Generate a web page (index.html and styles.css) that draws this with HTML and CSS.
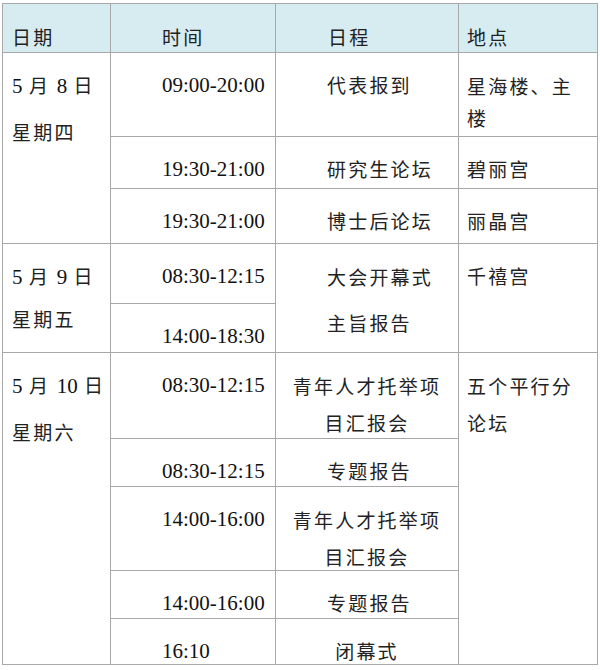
FILE: index.html
```html
<!DOCTYPE html>
<html lang="zh-CN">
<head>
<meta charset="utf-8">
<title>日程</title>
<link rel="stylesheet" href="styles.css">
</head>
<body>
<div class="sched">
  <div class="cell head c1">日期</div>
  <div class="cell head c2">时间</div>
  <div class="cell head c3">日程</div>
  <div class="cell head c4">地点</div>

  <div class="cell date d8"><div><span class="num">5</span> 月 <span class="num">8</span> 日</div><div>星期四</div></div>
  <div class="cell time r2">09:00-20:00</div>
  <div class="cell prog r2">代表报到</div>
  <div class="cell loc loc-a r2"><div>星海楼、主</div><div>楼</div></div>

  <div class="cell time r3">19:30-21:00</div>
  <div class="cell prog r3">研究生论坛</div>
  <div class="cell loc r3">碧丽宫</div>

  <div class="cell time r4">19:30-21:00</div>
  <div class="cell prog r4">博士后论坛</div>
  <div class="cell loc r4">丽晶宫</div>

  <div class="cell date d9"><div><span class="num">5</span> 月 <span class="num">9</span> 日</div><div>星期五</div></div>
  <div class="cell time r5">08:30-12:15</div>
  <div class="cell prog prog-d"><div>大会开幕式</div><div>主旨报告</div></div>
  <div class="cell loc loc-d">千禧宫</div>

  <div class="cell time r6">14:00-18:30</div>

  <div class="cell date d10"><div><span class="num">5</span> 月 <span class="num">10</span> 日</div><div>星期六</div></div>
  <div class="cell time r7">08:30-12:15</div>
  <div class="cell prog two center r7"><div>青年人才托举项</div><div>目汇报会</div></div>
  <div class="cell loc loc-e"><div>五个平行分</div><div>论坛</div></div>

  <div class="cell time r8">08:30-12:15</div>
  <div class="cell prog r8">专题报告</div>

  <div class="cell time r9">14:00-16:00</div>
  <div class="cell prog two center r9"><div>青年人才托举项</div><div>目汇报会</div></div>

  <div class="cell time r10">14:00-16:00</div>
  <div class="cell prog r10">专题报告</div>

  <div class="cell time r11">16:10</div>
  <div class="cell prog center r11">闭幕式</div>
</div>
</body>
</html>
```

FILE: styles.css
```css
html, body {
  margin: 0;
  padding: 0;
  background: #ffffff;
}

body {
  font-family: "Liberation Serif", "Noto Sans CJK SC", serif;
  color: #1a1a1a;
}

.sched {
  margin: 3px 0 0 2px;
  width: 596px;
  display: grid;
  grid-template-columns: 108px 165px 183px 139px;
  grid-template-rows: 49px 84px 52px 55px 60px 49px 86px 48px 84px 48px 46px;
  border-top: 1px solid #a8a8a8;
  border-left: 1px solid #a8a8a8;
  box-sizing: border-box;
}

.cell {
  box-sizing: border-box;
  border-right: 1px solid #a8a8a8;
  border-bottom: 1px solid #a8a8a8;
  font-family: "Noto Sans CJK SC", sans-serif;
  font-size: 19px;
  letter-spacing: 2.2px;
  line-height: 30px;
  padding-top: 17px;
  white-space: nowrap;
  color: #222222;
}

.num {
  font-family: "Liberation Serif", serif;
  font-size: 21px;
  letter-spacing: 0;
  line-height: 1;
  color: #111111;
}

.head {
  background: #d6ecf1;
  grid-row: 1;
  padding-top: 18px;
}
.head.c1 { grid-column: 1; padding-left: 9px; }
.head.c2 { grid-column: 2; padding-left: 51px; }
.head.c3 { grid-column: 3; padding-left: 52px; }
.head.c4 { grid-column: 4; padding-left: 8px; }

.date {
  grid-column: 1;
  padding-left: 9px;
  line-height: 47px;
  padding-top: 8px;
}
.d8 { grid-row: 2 / 5; }
.d9 { grid-row: 5 / 7; line-height: 43px; padding-top: 10px; }
.d10 { grid-row: 7 / 12; }

.time {
  grid-column: 2;
  padding-left: 51px;
  font-family: "Liberation Serif", serif;
  font-size: 21px;
  letter-spacing: 0;
  color: #111111;
}

.prog {
  grid-column: 3;
  padding-left: 51px;
}
.prog.center {
  padding-left: 0;
  text-align: center;
}
.prog.two {
  line-height: 37px;
  padding-top: 14px;
}
.prog-d {
  grid-row: 5 / 7;
  line-height: 46px;
  padding-top: 10px;
}

.loc {
  grid-column: 4;
  padding-left: 8px;
}
.loc-a {
  line-height: 32px;
  padding-top: 17px;
}
.loc-d { grid-row: 5 / 7; }
.loc-e {
  grid-row: 7 / 12;
  line-height: 37px;
  padding-top: 14px;
}

.r2 { grid-row: 2; }
.r3 { grid-row: 3; }
.r4 { grid-row: 4; }
.r5 { grid-row: 5; }
.r6 { grid-row: 6; }
.r7 { grid-row: 7; }
.r8 { grid-row: 8; }
.r9 { grid-row: 9; }
.r10 { grid-row: 10; }
.r11 { grid-row: 11; }
```
